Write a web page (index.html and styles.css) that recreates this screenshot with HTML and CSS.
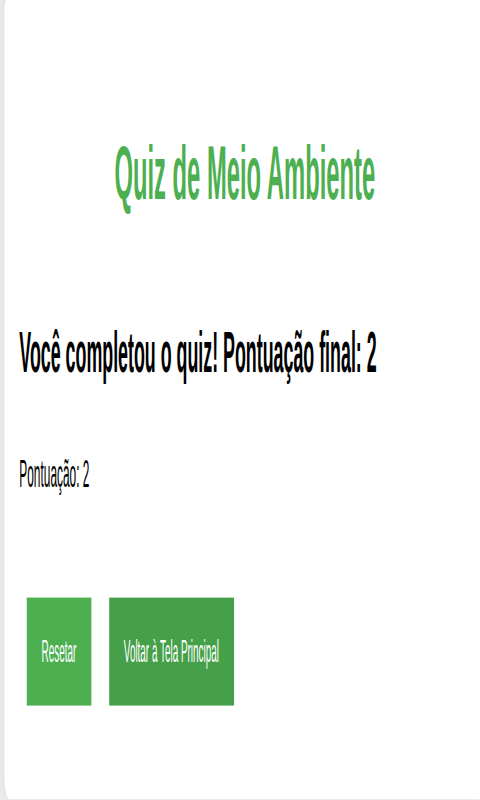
FILE: index.html
```html
<!DOCTYPE html>
<html lang="pt">
<head>
<meta charset="utf-8">
<title>Quiz de Meio Ambiente</title>
<link rel="stylesheet" href="styles.css">
</head>
<body>
<div class="stage">
  <div class="card">
    <h1 class="title">Quiz de Meio Ambiente</h1>
    <h2 class="result">Você completou o quiz! Pontuação final: 2</h2>
    <p class="score">Pontuação: 2</p>
    <div class="actions">
      <button class="btn btn-reset">Resetar</button>
      <button class="btn btn-home">Voltar à Tela Principal</button>
    </div>
  </div>
</div>
</body>
</html>
```

FILE: styles.css
```css
html, body {
  margin: 0;
  padding: 0;
  overflow: hidden;
  background: #ececec;
}

body {
  width: 480px;
  height: 800px;
  font-family: "Liberation Sans", Arial, sans-serif;
}

.stage {
  width: 646px;
  height: 333px;
  overflow: hidden;
  transform: scale(0.743, 2.4);
  transform-origin: 0 0;
}

.card {
  box-sizing: border-box;
  width: 644px;
  height: 335.5px;
  margin: -3px 0 0 6px;
  padding: 20px 17px 20px 20px;
  background: #ffffff;
  border-radius: 8px 0 0 8px;
  box-shadow: 0 0 6px rgba(0, 0, 0, 0.06);
  display: flex;
  flex-direction: column;
}

.title {
  margin: 37px 0 0;
  font-size: 32px;
  font-weight: bold;
  line-height: normal;
  color: #4caf50;
  text-align: center;
}

.result {
  margin: 42px 0 0;
  font-size: 24px;
  font-weight: bold;
  line-height: normal;
  color: #000000;
}

.score {
  margin: 28px 0 0;
  font-size: 16px;
  line-height: normal;
  color: #000000;
}

.actions {
  display: flex;
  gap: 24px;
  margin: 42px 0 0 10px;
}

.btn {
  font-family: "Liberation Sans", Arial, sans-serif;
  font-size: 13.333px;
  line-height: normal;
  padding: 15px 20px;
  border: none;
  border-radius: 0;
  color: #ffffff;
  cursor: pointer;
}

.btn-reset {
  background: #4caf50;
}

.btn-home {
  background: #45a049;
}
```
